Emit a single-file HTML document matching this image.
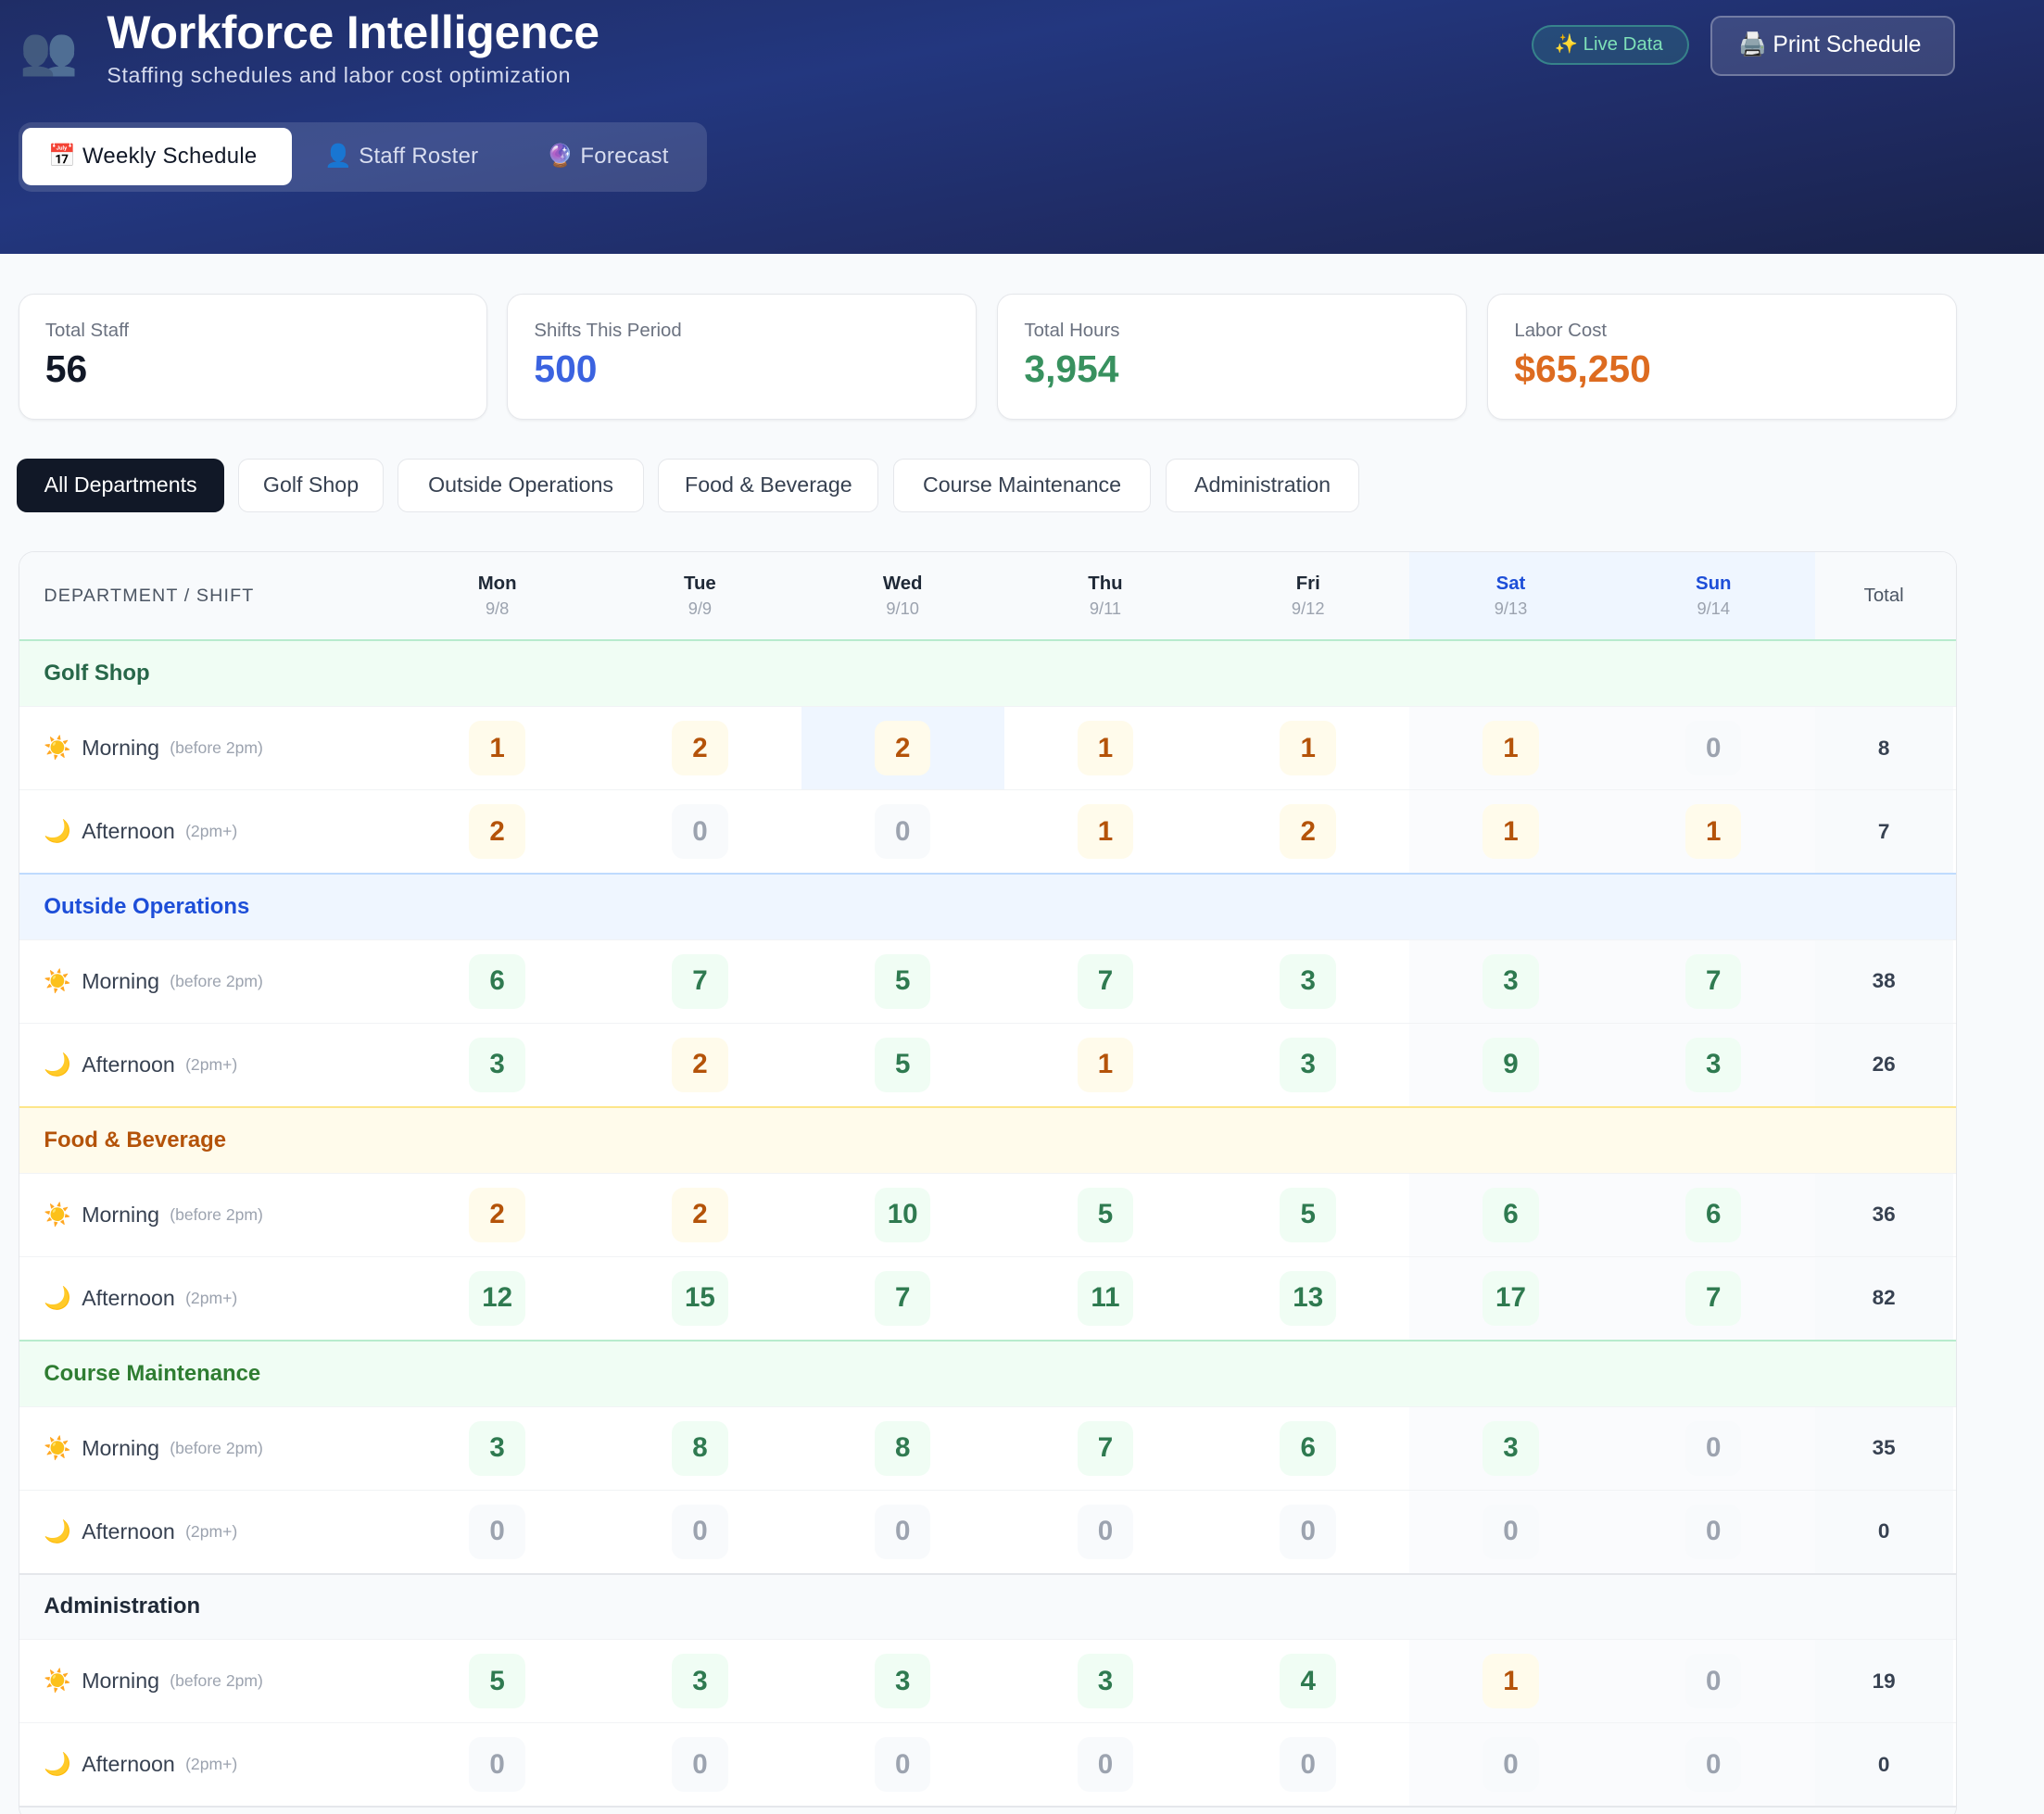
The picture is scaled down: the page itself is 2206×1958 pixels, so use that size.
<!DOCTYPE html>
<html><head><meta charset="utf-8"><style>
*{box-sizing:border-box;margin:0;padding:0}
html,body{width:2206px;height:1958px;overflow:hidden;background:#f8fafc}
#r{zoom:1.40689;width:1568px;height:1392px;position:relative;font-family:"Liberation Sans","Noto Sans CJK JP",sans-serif;color:#1f2937}
.hdr{position:absolute;left:0;top:0;width:1568px;height:195px;background:linear-gradient(170deg,#1f2d66 0%,#23377f 35%,#1f2b63 70%,#19224a 100%)}
.abs{position:absolute}
.title{left:82px;top:4px;font-size:35.5px;font-weight:bold;color:#fff;letter-spacing:-0.1px}
.sub{left:82px;top:48px;font-size:16.5px;color:#d5dbee;letter-spacing:0.45px}
.tabs{left:14px;top:94px;width:528px;height:53px;background:rgba(255,255,255,.13);border-radius:10px}
.tab{position:absolute;top:4px;height:44px;line-height:44px;font-size:17px;color:#d9def0;padding-left:20px;letter-spacing:0.2px}
.tab.on{left:3px;width:207px;background:#fff;border-radius:7px;color:#111827}
.live{left:1175px;top:19px;width:121px;height:31px;border:1.5px solid rgba(72,187,160,.5);background:rgba(56,150,140,.25);border-radius:16px;color:#7ee0b8;font-size:14.5px;line-height:28px;padding-left:16px}
.print{left:1312px;top:12px;width:188px;height:46px;border:1.5px solid rgba(255,255,255,.28);background:rgba(255,255,255,.12);border-radius:8px;color:#fff;font-size:17.5px;line-height:43px;padding-left:20px}
.card{position:absolute;top:225px;width:360px;height:97px;background:#fff;border:1px solid #e5e7eb;border-radius:12px;box-shadow:0 1px 2px rgba(0,0,0,.05)}
.card .l{position:absolute;left:20px;top:20px;font-size:14.5px;color:#6b7280}
.card .v{position:absolute;left:20px;top:41px;font-size:29px;font-weight:bold}
.fb{position:absolute;top:352px;height:41px;border:1px solid #e5e7eb;background:#fff;border-radius:8px;font-size:16.5px;color:#374151;line-height:39px;text-align:center}
.fb.on{background:#111827;color:#fff;border-color:#111827}
.tbl{position:absolute;left:14px;top:423px;width:1487px;height:975px;border:1px solid #e5e7eb;border-radius:12px;background:#fff;overflow:hidden}
.row{display:flex;height:64px;border-top:1px solid #f1f3f5;align-items:center}
.row>div{height:100%;display:flex;align-items:center;justify-content:center}
.lab{width:289px;justify-content:flex-start!important;padding-left:19px;font-size:16.5px;color:#374151}
.lab small{font-size:12.5px;color:#9ca3af;margin-left:8px}
.lab i{font-style:normal;font-size:17px;margin-right:9px;width:20px}
.d{width:155.5px}
.we{background:#fafbfd}
.tot{width:106px;background:#f8fafc;font-size:16px;font-weight:bold;color:#374151}
.p{width:43px;height:42px;border-radius:9px;display:flex;align-items:center;justify-content:center;font-size:21px;font-weight:bold}
.o{background:#fffbeb;color:#b45309}.g{background:#f0fdf4;color:#2f7a50}.z{background:#f8fafc;color:#9ca3af}
.head{height:67px;display:flex;background:#f8fafc}
.head>div{display:flex;flex-direction:column;align-items:center;justify-content:center}
.head>div.hl{width:289px;flex-direction:row;justify-content:flex-start;align-items:center;padding-left:19px;font-size:14px;letter-spacing:.8px;color:#4b5563}
.head b{font-size:14.5px;color:#1f2937}
.head span{font-size:13px;color:#9ca3af;margin-top:3px}
.head .ws{background:#eff6ff}.head .ws b{color:#1d4ed8}
.dept{height:51px;border-top:2px solid;display:flex;align-items:center;padding-left:19px;font-size:17px;font-weight:bold}
</style></head><body><div id="r">
<div class="hdr">
<div class="abs" style="left:15px;top:18px;font-size:36px;opacity:.7;filter:grayscale(.7)">👥</div>
<div class="abs title">Workforce Intelligence</div>
<div class="abs sub">Staffing schedules and labor cost optimization</div>
<div class="abs tabs">
<div class="tab on">📅 Weekly Schedule</div>
<div class="tab" style="left:215px">👤 Staff Roster</div>
<div class="tab" style="left:385px">🔮 Forecast</div>
</div>
<div class="abs live">✨ Live Data</div>
<div class="abs print">🖨️ Print Schedule</div>
</div>

<div class="card" style="left:14px"><div class="l">Total Staff</div><div class="v" style="color:#111827">56</div></div>
<div class="card" style="left:389px"><div class="l">Shifts This Period</div><div class="v" style="color:#3b63e0">500</div></div>
<div class="card" style="left:765px"><div class="l">Total Hours</div><div class="v" style="color:#38915f">3,954</div></div>
<div class="card" style="left:1141px"><div class="l">Labor Cost</div><div class="v" style="color:#dd6b20">$65,250</div></div>

<div class="fb on" style="left:13px;width:159px">All Departments</div>
<div class="fb" style="left:183px;width:111px">Golf Shop</div>
<div class="fb" style="left:305px;width:189px">Outside Operations</div>
<div class="fb" style="left:505px;width:169px">Food &amp; Beverage</div>
<div class="fb" style="left:685px;width:198px">Course Maintenance</div>
<div class="fb" style="left:894px;width:149px">Administration</div>

<div class="tbl">
<div class="head">
<div class="hl">DEPARTMENT / SHIFT</div>
<div class="d"><b>Mon</b><span>9/8</span></div>
<div class="d"><b>Tue</b><span>9/9</span></div>
<div class="d"><b>Wed</b><span>9/10</span></div>
<div class="d"><b>Thu</b><span>9/11</span></div>
<div class="d"><b>Fri</b><span>9/12</span></div>
<div class="d ws"><b>Sat</b><span>9/13</span></div>
<div class="d ws"><b>Sun</b><span>9/14</span></div>
<div class="tot" style="font-weight:normal;font-size:14.5px;color:#4b5563">Total</div>
</div>

<div class="dept" style="background:#f0fdf4;color:#276749;border-color:#b7ebcd">Golf Shop</div>
<div class="row"><div class="lab"><i>☀️</i>Morning<small>(before 2pm)</small></div><div class="d"><div class="p o">1</div></div><div class="d"><div class="p o">2</div></div><div class="d" style="background:#eff6ff"><div class="p o">2</div></div><div class="d"><div class="p o">1</div></div><div class="d"><div class="p o">1</div></div><div class="d we"><div class="p o">1</div></div><div class="d we"><div class="p z">0</div></div><div class="tot">8</div></div>
<div class="row"><div class="lab"><i>🌙</i>Afternoon<small>(2pm+)</small></div><div class="d"><div class="p o">2</div></div><div class="d"><div class="p z">0</div></div><div class="d"><div class="p z">0</div></div><div class="d"><div class="p o">1</div></div><div class="d"><div class="p o">2</div></div><div class="d we"><div class="p o">1</div></div><div class="d we"><div class="p o">1</div></div><div class="tot">7</div></div>

<div class="dept" style="background:#eff6ff;color:#1d4ed8;border-color:#bfdbfe">Outside Operations</div>
<div class="row"><div class="lab"><i>☀️</i>Morning<small>(before 2pm)</small></div><div class="d"><div class="p g">6</div></div><div class="d"><div class="p g">7</div></div><div class="d"><div class="p g">5</div></div><div class="d"><div class="p g">7</div></div><div class="d"><div class="p g">3</div></div><div class="d we"><div class="p g">3</div></div><div class="d we"><div class="p g">7</div></div><div class="tot">38</div></div>
<div class="row"><div class="lab"><i>🌙</i>Afternoon<small>(2pm+)</small></div><div class="d"><div class="p g">3</div></div><div class="d"><div class="p o">2</div></div><div class="d"><div class="p g">5</div></div><div class="d"><div class="p o">1</div></div><div class="d"><div class="p g">3</div></div><div class="d we"><div class="p g">9</div></div><div class="d we"><div class="p g">3</div></div><div class="tot">26</div></div>

<div class="dept" style="background:#fffbeb;color:#b45309;border-color:#fde68a">Food &amp; Beverage</div>
<div class="row"><div class="lab"><i>☀️</i>Morning<small>(before 2pm)</small></div><div class="d"><div class="p o">2</div></div><div class="d"><div class="p o">2</div></div><div class="d"><div class="p g">10</div></div><div class="d"><div class="p g">5</div></div><div class="d"><div class="p g">5</div></div><div class="d we"><div class="p g">6</div></div><div class="d we"><div class="p g">6</div></div><div class="tot">36</div></div>
<div class="row"><div class="lab"><i>🌙</i>Afternoon<small>(2pm+)</small></div><div class="d"><div class="p g">12</div></div><div class="d"><div class="p g">15</div></div><div class="d"><div class="p g">7</div></div><div class="d"><div class="p g">11</div></div><div class="d"><div class="p g">13</div></div><div class="d we"><div class="p g">17</div></div><div class="d we"><div class="p g">7</div></div><div class="tot">82</div></div>

<div class="dept" style="background:#f0fdf4;color:#2f7d32;border-color:#b7ebcd">Course Maintenance</div>
<div class="row"><div class="lab"><i>☀️</i>Morning<small>(before 2pm)</small></div><div class="d"><div class="p g">3</div></div><div class="d"><div class="p g">8</div></div><div class="d"><div class="p g">8</div></div><div class="d"><div class="p g">7</div></div><div class="d"><div class="p g">6</div></div><div class="d we"><div class="p g">3</div></div><div class="d we"><div class="p z">0</div></div><div class="tot">35</div></div>
<div class="row"><div class="lab"><i>🌙</i>Afternoon<small>(2pm+)</small></div><div class="d"><div class="p z">0</div></div><div class="d"><div class="p z">0</div></div><div class="d"><div class="p z">0</div></div><div class="d"><div class="p z">0</div></div><div class="d"><div class="p z">0</div></div><div class="d we"><div class="p z">0</div></div><div class="d we"><div class="p z">0</div></div><div class="tot">0</div></div>

<div class="dept" style="background:#f8fafc;color:#1f2937;border-color:#e5e7eb">Administration</div>
<div class="row"><div class="lab"><i>☀️</i>Morning<small>(before 2pm)</small></div><div class="d"><div class="p g">5</div></div><div class="d"><div class="p g">3</div></div><div class="d"><div class="p g">3</div></div><div class="d"><div class="p g">3</div></div><div class="d"><div class="p g">4</div></div><div class="d we"><div class="p o">1</div></div><div class="d we"><div class="p z">0</div></div><div class="tot">19</div></div>
<div class="row"><div class="lab"><i>🌙</i>Afternoon<small>(2pm+)</small></div><div class="d"><div class="p z">0</div></div><div class="d"><div class="p z">0</div></div><div class="d"><div class="p z">0</div></div><div class="d"><div class="p z">0</div></div><div class="d"><div class="p z">0</div></div><div class="d we"><div class="p z">0</div></div><div class="d we"><div class="p z">0</div></div><div class="tot">0</div></div>
<div style="border-top:2px solid #e5e7eb;height:20px;background:#f8fafc"></div>
</div>
</div></body></html>
